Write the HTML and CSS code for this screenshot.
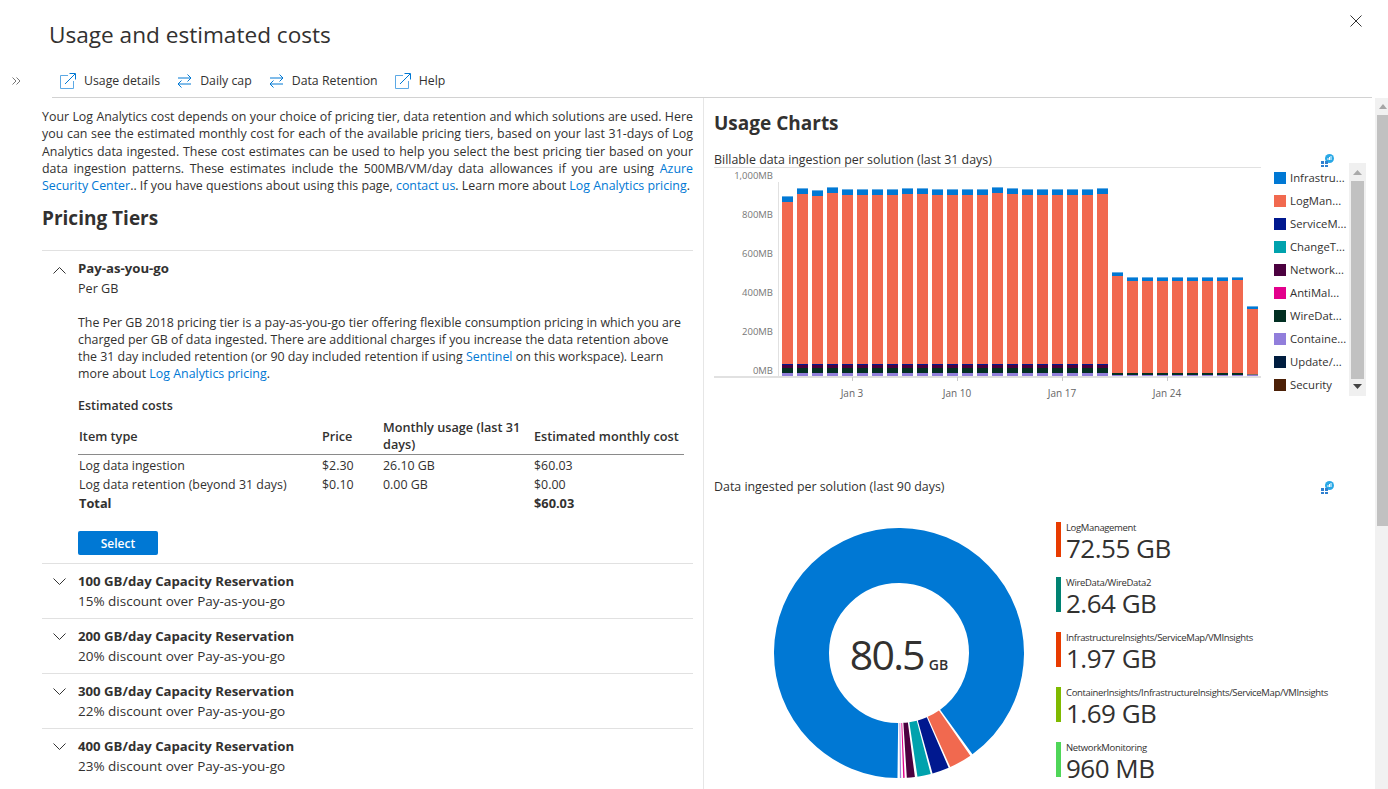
FILE: index.html

```html
<!DOCTYPE html>
<html lang="en">
<head>
  <meta charset="UTF-8" />
  <title>Usage and estimated costs</title>
  <link rel="stylesheet" href="styles.css">
</head>
<body>
  <header class="blade-head">
    <h1>Usage and estimated costs</h1>
    <button class="close" aria-label="Close">
      <svg width="12" height="12" viewBox="0 0 12 12"><path d="M0.5 0.5L11.5 11.5M11.5 0.5L0.5 11.5" stroke="#333" fill="none"/></svg>
    </button>
    <div class="toolbar-row">
      <svg class="expand" width="9" height="8" viewBox="0 0 9 8"><path d="M0.5 0.5L4 4L0.5 7.5M4.5 0.5L8 4L4.5 7.5" stroke="#777" fill="none"/></svg>
      <nav class="toolbar">
        <a class="tool"><svg width="16" height="16" viewBox="0 0 16 16"><path d="M8 2.5H0.5V15.5H13.5V8" stroke="#5ca9e5" fill="none"/><path d="M5 11L15 1M9.5 0.5H15.5V6.5" stroke="#0078d4" fill="none"/></svg>Usage details</a>
        <a class="tool"><svg width="15" height="16" viewBox="0 0 15 16"><path d="M1 5H14M10.5 1.5L14 5L10.5 8.5" stroke="#0078d4" fill="none"/><path d="M14 11H1M4.5 7.5L1 11L4.5 14.5" stroke="#0078d4" fill="none"/></svg>Daily cap</a>
        <a class="tool"><svg width="15" height="16" viewBox="0 0 15 16"><path d="M1 5H14M10.5 1.5L14 5L10.5 8.5" stroke="#0078d4" fill="none"/><path d="M14 11H1M4.5 7.5L1 11L4.5 14.5" stroke="#0078d4" fill="none"/></svg>Data Retention</a>
        <a class="tool"><svg width="16" height="16" viewBox="0 0 16 16"><path d="M8 2.5H0.5V15.5H13.5V8" stroke="#5ca9e5" fill="none"/><path d="M5 11L15 1M9.5 0.5H15.5V6.5" stroke="#0078d4" fill="none"/></svg>Help</a>
      </nav>
    </div>
  </header>

  <main class="blade-body">
    <section class="pricing">
      <p class="intro">Your Log Analytics cost depends on your choice of pricing tier, data retention and which solutions are used. Here you can see the estimated monthly cost for each of the available pricing tiers, based on your last 31-days of Log Analytics data ingested. These cost estimates can be used to help you select the best pricing tier based on your data ingestion patterns. These estimates include the 500MB/VM/day data allowances if you are using <a href="#">Azure Security Center</a>.. If you have questions about using this page, <a href="#">contact us</a>. Learn more about <a href="#">Log Analytics pricing</a>.</p>
      <h2>Pricing Tiers</h2>

      <div class="tier tier-open">
        <svg class="chevron" width="13" height="7" viewBox="0 0 13 7"><path d="M0.5 6.5L6.5 0.5L12.5 6.5" stroke="#333" fill="none"/></svg>
        <h3>Pay-as-you-go</h3>
        <div class="tier-sub tier-sub-open">Per GB</div>
        <p class="tier-text">The Per GB 2018 pricing tier is a pay-as-you-go tier offering flexible consumption pricing in which you are charged per GB of data ingested. There are additional charges if you increase the data retention above the 31 day included retention (or 90 day included retention if using <a href="#">Sentinel</a> on this workspace). Learn more about <a href="#">Log Analytics pricing</a>.</p>
        <h4>Estimated costs</h4>
        <table class="costs">
          <thead>
            <tr><th class="col-item">Item type</th><th class="col-price">Price</th><th class="col-usage">Monthly usage (last 31 days)</th><th>Estimated monthly cost</th></tr>
          </thead>
          <tbody>
            <tr><td>Log data ingestion</td><td>$2.30</td><td>26.10 GB</td><td>$60.03</td></tr>
            <tr><td>Log data retention (beyond 31 days)</td><td>$0.10</td><td>0.00 GB</td><td>$0.00</td></tr>
            <tr class="total"><td>Total</td><td></td><td></td><td>$60.03</td></tr>
          </tbody>
        </table>
        <button class="select">Select</button>
      </div>

      <div class="tier">
        <svg class="chevron" width="13" height="7" viewBox="0 0 13 7"><path d="M0.5 0.5L6.5 6.5L12.5 0.5" stroke="#333" fill="none"/></svg>
        <h3>100 GB/day Capacity Reservation</h3>
        <div class="tier-sub">15% discount over Pay-as-you-go</div>
      </div>
      <div class="tier">
        <svg class="chevron" width="13" height="7" viewBox="0 0 13 7"><path d="M0.5 0.5L6.5 6.5L12.5 0.5" stroke="#333" fill="none"/></svg>
        <h3>200 GB/day Capacity Reservation</h3>
        <div class="tier-sub">20% discount over Pay-as-you-go</div>
      </div>
      <div class="tier">
        <svg class="chevron" width="13" height="7" viewBox="0 0 13 7"><path d="M0.5 0.5L6.5 6.5L12.5 0.5" stroke="#333" fill="none"/></svg>
        <h3>300 GB/day Capacity Reservation</h3>
        <div class="tier-sub">22% discount over Pay-as-you-go</div>
      </div>
      <div class="tier">
        <svg class="chevron" width="13" height="7" viewBox="0 0 13 7"><path d="M0.5 0.5L6.5 6.5L12.5 0.5" stroke="#333" fill="none"/></svg>
        <h3>400 GB/day Capacity Reservation</h3>
        <div class="tier-sub">23% discount over Pay-as-you-go</div>
      </div>
    </section>

    <section class="charts">
      <h2>Usage Charts</h2>

      <div class="chart-head">
        <span>Billable data ingestion per solution (last 31 days)</span>
        <svg class="pin" width="13" height="13" viewBox="0 0 13 13"><circle cx="8.5" cy="4.5" r="4.5" fill="#29a8e6"/><path d="M7 6V4M8.5 6V3M10 6V2" stroke="#fff"/><path d="M0 7h3v3H0zM4 7h3v3H4zM0 11h3v2H0zM4 11h3v2H4z" fill="#2f80d0"/></svg>
      </div>
      <div class="bar-block">
        <div class="bar-plot">
          <svg id="bars" width="547" height="232" viewBox="714 163 547 232"></svg>
          <div class="y-label y-1000">1,000MB</div>
          <div class="y-label y-800">800MB</div>
          <div class="y-label y-600">600MB</div>
          <div class="y-label y-400">400MB</div>
          <div class="y-label y-200">200MB</div>
          <div class="y-label y-0">0MB</div>
          <div class="x-label x-3">Jan 3</div>
          <div class="x-label x-10">Jan 10</div>
          <div class="x-label x-17">Jan 17</div>
          <div class="x-label x-24">Jan 24</div>
        </div>
        <div class="legend">
          <ul>
            <li><i class="c-infra"></i>Infrastru...</li>
            <li><i class="c-log"></i>LogMan...</li>
            <li><i class="c-service"></i>ServiceM...</li>
            <li><i class="c-change"></i>ChangeT...</li>
            <li><i class="c-network"></i>Network...</li>
            <li><i class="c-anti"></i>AntiMal...</li>
            <li><i class="c-wire"></i>WireDat...</li>
            <li><i class="c-container"></i>Containe...</li>
            <li><i class="c-update"></i>Update/...</li>
            <li><i class="c-security"></i>Security</li>
          </ul>
          <div class="legend-scroll">
            <svg class="arrow" width="9" height="5" viewBox="0 0 9 5"><path d="M4.5 0L9 5H0z" fill="#aaa"/></svg>
            <div class="legend-thumb"></div>
            <svg class="arrow" width="9" height="5" viewBox="0 0 9 5"><path d="M0 0H9L4.5 5z" fill="#444"/></svg>
          </div>
        </div>
      </div>

      <div class="chart-head chart-head-2">
        <span>Data ingested per solution (last 90 days)</span>
        <svg class="pin" width="13" height="13" viewBox="0 0 13 13"><circle cx="8.5" cy="4.5" r="4.5" fill="#29a8e6"/><path d="M7 6V4M8.5 6V3M10 6V2" stroke="#fff"/><path d="M0 7h3v3H0zM4 7h3v3H4zM0 11h3v2H0zM4 11h3v2H4z" fill="#2f80d0"/></svg>
      </div>
      <div class="donut-block">
        <div class="donut">
          <svg width="250" height="250" viewBox="0 0 250 250">
            <circle class="slice" cx="125" cy="125" r="97.5" pathLength="360" stroke="#0078d4" stroke-dasharray="323.3 360" transform="rotate(90.7 125 125)"/>
            <circle class="slice" cx="125" cy="125" r="97.5" pathLength="360" stroke="#f1694f" stroke-dasharray="10.6 360" transform="rotate(55.2 125 125)"/>
            <circle class="slice" cx="125" cy="125" r="97.5" pathLength="360" stroke="#00188f" stroke-dasharray="7.9 360" transform="rotate(66.6 125 125)"/>
            <circle class="slice" cx="125" cy="125" r="97.5" pathLength="360" stroke="#00a2ad" stroke-dasharray="6.3 360" transform="rotate(75.3 125 125)"/>
            <circle class="slice" cx="125" cy="125" r="97.5" pathLength="360" stroke="#4b003f" stroke-dasharray="3.8 360" transform="rotate(82.7 125 125)"/>
            <circle class="slice" cx="125" cy="125" r="97.5" pathLength="360" stroke="#e3008c" stroke-dasharray="0.7 360" transform="rotate(87.4 125 125)"/>
            <circle class="slice" cx="125" cy="125" r="97.5" pathLength="360" stroke="#9c84d8" stroke-dasharray="0.6 360" transform="rotate(89 125 125)"/>
          </svg>
          <div class="donut-total">80.5<small>GB</small></div>
        </div>
        <ul class="stats">
          <li class="s-log"><span>LogManagement</span><b>72.55 GB</b></li>
          <li class="s-wire"><span>WireData/WireData2</span><b>2.64 GB</b></li>
          <li class="s-infra"><span>InfrastructureInsights/ServiceMap/VMInsights</span><b>1.97 GB</b></li>
          <li class="s-cont"><span>ContainerInsights/InfrastructureInsights/ServiceMap/VMInsights</span><b>1.69 GB</b></li>
          <li class="s-net"><span>NetworkMonitoring</span><b>960 MB</b></li>
        </ul>
      </div>
    </section>

    <div class="page-scroll">
      <svg class="page-arrow" width="8" height="5" viewBox="0 0 8 5"><path d="M4 0L8 5H0z" fill="#a6a6a6"/></svg>
      <div class="page-thumb"></div>
    </div>
  </main>
  <script src="chart.js"></script>
</body>
</html>
```

FILE: styles.css

```css
:root {
  --text: #323130;
  --link: #0078d4;
  --line: #e1e1e1;
  --thumb: #c1c1c1;
}

* {
  box-sizing: border-box;
}

html, body {
  height: 789px;
  overflow: hidden;
}

body {
  margin: 0;
  background: #fff;
  color: var(--text);
  font-family: "Open Sans", "Noto Sans", sans-serif;
  font-size: 12.4px;
  line-height: 17px;
}

a {
  color: var(--link);
  text-decoration: none;
}

/* header */
.blade-head {
  position: relative;
  height: 98px;
  padding-top: 19px;
}

h1 {
  margin: 0 0 0 49px;
  height: 34px;
  font-size: 22.6px;
  line-height: 32px;
  font-weight: 400;
}

.close {
  position: absolute;
  top: 15px;
  right: 26px;
  padding: 0;
  border: 0;
  background: none;
  line-height: 0;
}

.toolbar-row {
  display: flex;
  align-items: center;
  height: 45px;
  padding-left: 12px;
}

.expand {
  flex: none;
  margin-top: 11px;
}

.toolbar {
  display: flex;
  align-items: center;
  flex: 1;
  height: 45px;
  margin: 0 16px 0 31px;
  padding: 11px 0 0 8px;
  border-bottom: 1px solid #d2d2d2;
}

.tool {
  display: flex;
  align-items: center;
  gap: 8px;
  margin-right: 17px;
  font-size: 12.3px;
  color: var(--text);
}

/* body panes */
.blade-body {
  display: flex;
  height: 691px;
}

.pricing {
  flex: none;
  width: 704px;
  padding: 10px 10px 0 42px;
  border-right: 1px solid #e6e6e6;
}

.intro {
  margin: 0;
  text-align: justify;
  line-height: 17.3px;
}

h2 {
  margin: 12px 0 20px;
  font-size: 19px;
  line-height: 24px;
  font-weight: 700;
}

.tier {
  position: relative;
  height: 55px;
  padding: 8px 0 0 36px;
  border-top: 1px solid var(--line);
}

.tier-open {
  height: 313px;
}

.chevron {
  position: absolute;
  left: 11px;
  top: 14px;
}

.tier-open .chevron {
  top: 16px;
}

h3 {
  margin: 0;
  font-size: 13.2px;
  line-height: 19px;
  font-weight: 700;
}

.tier-sub {
  font-size: 13.5px;
  line-height: 20px;
}

.tier-sub-open {
  padding-top: 1px;
  font-size: 12.6px;
  line-height: 20px;
}

.tier-text {
  margin: 15px 9px 0 0;
  line-height: 17px;
}

h4 {
  margin: 15px 0 0;
  font-size: 12.5px;
  line-height: 17px;
  font-weight: 600;
}

.costs {
  width: 606px;
  margin-top: 5px;
  border-collapse: collapse;
  table-layout: fixed;
}

.costs th {
  padding: 0 1px 1px;
  border-bottom: 1px solid #8a8a8a;
  text-align: left;
  font-size: 12.7px;
  font-weight: 600;
  line-height: 17px;
  vertical-align: middle;
}

.costs td {
  padding: 2px 1px 0;
  height: 19px;
}

.col-item {
  width: 243px;
}

.col-price {
  width: 61px;
}

.col-usage {
  width: 151px;
}

.costs .total td {
  font-size: 12.8px;
  font-weight: 700;
}

.select {
  display: block;
  width: 80px;
  height: 24px;
  margin-top: 19px;
  padding: 0;
  border: 0;
  border-radius: 2px;
  background: #0078d4;
  color: #fff;
  font: 600 12px "Open Sans", sans-serif;
}

/* charts pane */
.charts {
  flex: none;
  width: 671px;
  padding: 12px 0 0 10px;
}

.charts h2 {
  margin: 0 0 16px;
  padding-top: 1px;
}

.chart-head {
  display: flex;
  align-items: flex-start;
  justify-content: space-between;
  width: 622px;
  height: 12px;
}

.pin {
  margin: 3px 2px 0 0;
}

.bar-block {
  display: flex;
  height: 234px;
}

.bar-plot {
  position: relative;
  width: 560px;
  height: 234px;
  font-size: 10px;
  color: #666;
}

#bars {
  display: block;
}

.y-label {
  position: absolute;
  right: 501px;
  font-size: 9.5px;
  line-height: 14px;
  color: #777;
}

.y-1000 { top: 6px; }
.y-800 { top: 45px; }
.y-600 { top: 84px; }
.y-400 { top: 123px; }
.y-200 { top: 162px; }
.y-0 { top: 201px; }

.x-label {
  position: absolute;
  top: 223px;
  width: 60px;
  margin-left: -30px;
  text-align: center;
  line-height: 14px;
}

.x-3 { left: 138px; }
.x-10 { left: 243px; }
.x-17 { left: 348px; }
.x-24 { left: 453px; }

.legend {
  display: flex;
  width: 92px;
  height: 233px;
  font-size: 11.3px;
}

.legend ul {
  width: 75px;
  margin: 0;
  padding: 3px 0 0;
  list-style: none;
}

.legend li {
  display: flex;
  align-items: center;
  gap: 4px;
  height: 23px;
  white-space: nowrap;
}

.legend i {
  flex: none;
  width: 12px;
  height: 12px;
}

.c-infra { background: #0078d4; }
.c-log { background: #f1694f; }
.c-service { background: #00188f; }
.c-change { background: #00a2ad; }
.c-network { background: #4b003f; }
.c-anti { background: #e3008c; }
.c-wire { background: #022f22; }
.c-container { background: #917edb; }
.c-update { background: #001d3f; }
.c-security { background: #4c2007; }

.legend-scroll {
  display: flex;
  flex-direction: column;
  align-items: center;
  justify-content: space-between;
  width: 17px;
  padding: 7px 0;
  background: #f0f0f0;
}

.legend-thumb {
  width: 13px;
  height: 198px;
  background: var(--thumb);
}

.arrow {
  flex: none;
}

.chart-head-2 {
  margin-top: 81px;
}

.donut-block {
  display: flex;
  margin-top: 38px;
  padding-left: 60px;
}

.donut {
  position: relative;
  width: 250px;
  height: 250px;
}

.slice {
  fill: none;
  stroke-width: 55;
}

.donut-total {
  position: absolute;
  inset: 0;
  display: flex;
  align-items: baseline;
  justify-content: center;
  padding-top: 98px;
  font-size: 41px;
  letter-spacing: -1.8px;
  line-height: 56px;
}

.donut-total small {
  margin-left: 5px;
  font-size: 14px;
  font-weight: 600;
  letter-spacing: 0;
  line-height: 16px;
}

.stats {
  margin: -6px 0 0 32px;
  padding: 0;
  list-style: none;
}

.stats li {
  display: flex;
  flex-direction: column;
  height: 35px;
  margin-bottom: 20px;
  padding-left: 5px;
  border-left: 5px solid;
}

.stats span {
  font-size: 9.5px;
  line-height: 12px;
  letter-spacing: -0.35px;
  white-space: nowrap;
}

.stats b {
  font-size: 26px;
  line-height: 28px;
  letter-spacing: -0.5px;
  font-weight: 400;
}

.stats .s-log { border-color: #e83b00; }
.stats .s-wire { border-color: #008272; }
.stats .s-infra { border-color: #e83b00; }
.stats .s-cont { border-color: #7fba00; }
.stats .s-net { border-color: #4fd658; }

.page-scroll {
  flex: none;
  display: flex;
  flex-direction: column;
  align-items: flex-end;
  width: 13px;
  background: #f1f1f1;
}

.page-arrow {
  flex: none;
  height: 5px;
  margin: 6px 1px 6px 0;
}

.page-thumb {
  width: 11px;
  height: 411px;
  background: var(--thumb);
}
```

FILE: chart.js

```js
// bar tops in px: [top of blue, top of coral]
const tall = [
  [196, 202], [188, 194], [190, 196], [187, 193], [189, 195], [189, 195],
  [189, 195], [189, 195], [188, 194], [188, 194], [189, 195], [189, 195],
  [189, 195], [189, 195], [187, 193], [188, 194], [189, 195], [189, 195],
  [189, 195], [189, 195], [189, 195], [188, 194]
];
const short = [
  [272, 276], [277, 281], [277, 281], [277, 281], [277, 281],
  [277, 281], [277, 281], [277, 281], [277, 280], [306, 309]
];

let out = "";

function rect(x, y1, y2, color) {
  out += `<rect x="${x}" y="${y1}" width="11" height="${y2 - y1}" fill="${color}"/>`;
}

tall.concat(short).forEach((b, i) => {
  const x = 782 + i * 15;
  rect(x, b[0], b[0] + 1, "#66aee5");
  rect(x, b[0] + 1, b[1], "#0078d4");
  if (i < 22) {
    rect(x, b[1], 364, "#f1694f");
    rect(x, 364, 365, "#00188f");
    rect(x, 365, 368, "#4b003f");
    rect(x, 368, 373, "#022f22");
    rect(x, 373, 376, "#917edb");
  } else {
    const end = i === 31 ? 374.5 : 373;
    rect(x, b[1], end, "#f1694f");
    rect(x, end, 375, "#022f22");
    rect(x, 375, 376.5, "#917edb");
  }
});

// axis lines
out += `<path d="M714 167.5H1261M778.5 182V376M714 376.5H1261" stroke="#e1e1e1" fill="none"/>`;
out += `<path d="M714 377.5H1261" stroke="#e1e1e1" fill="none"/>`;
out += `<path d="M852.5 377V381M957.5 377V381M1062.5 377V381M1167.5 377V381" stroke="#c8c8c8" fill="none"/>`;

document.getElementById("bars").innerHTML = out;
```
